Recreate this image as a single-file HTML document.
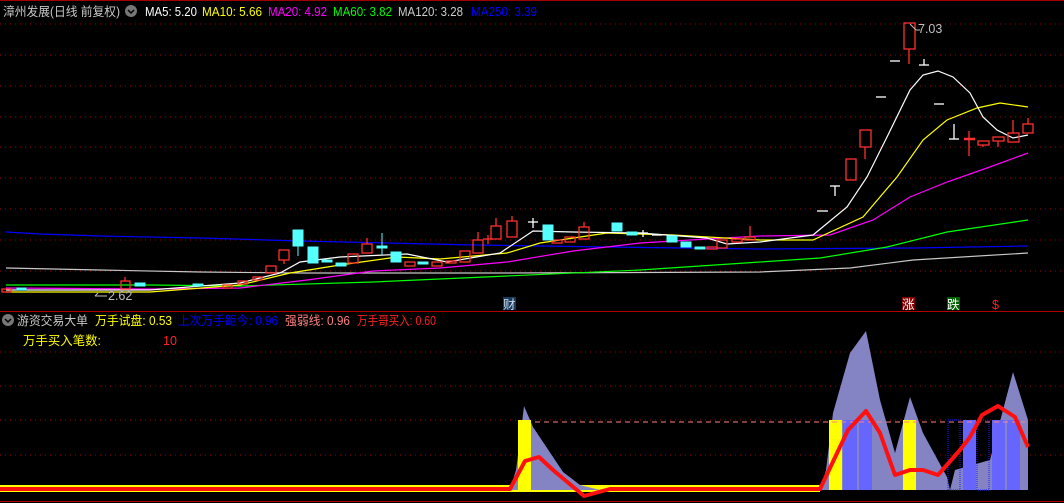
<!DOCTYPE html>
<html><head><meta charset="utf-8"><style>
html,body{margin:0;padding:0;background:#000;overflow:hidden}
svg{display:block}
text{font-family:"Liberation Sans","Noto Sans CJK SC",sans-serif;font-size:12.5px}
</style></head><body>
<svg width="1064" height="503" viewBox="0 0 1064 503" xmlns="http://www.w3.org/2000/svg">
<rect width="1064" height="503" fill="#000"/>
<line x1="0" y1="0.5" x2="1064" y2="0.5" stroke="#a00000"/>
<g stroke="#a00000" stroke-dasharray="1,4">
<line x1="0" y1="24" x2="1064" y2="24"/><line x1="0" y1="55" x2="1064" y2="55"/><line x1="0" y1="86" x2="1064" y2="86"/>
<line x1="0" y1="117" x2="1064" y2="117"/><line x1="0" y1="147" x2="1064" y2="147"/><line x1="0" y1="178" x2="1064" y2="178"/>
<line x1="0" y1="209" x2="1064" y2="209"/><line x1="0" y1="240" x2="1064" y2="240"/><line x1="0" y1="271" x2="1064" y2="271"/>
<line x1="0" y1="352" x2="1064" y2="352"/><line x1="0" y1="386" x2="1064" y2="386"/><line x1="0" y1="420" x2="1064" y2="420"/><line x1="0" y1="455" x2="1064" y2="455"/>
</g>
<line x1="0" y1="311.5" x2="1064" y2="311.5" stroke="#b00000"/>
<line x1="0" y1="501.5" x2="1064" y2="501.5" stroke="#b00000"/>
<text x="3" y="16" fill="#c8c8c8" textLength="117" lengthAdjust="spacingAndGlyphs">漳州发展(日线 前复权)</text>
<circle cx="131" cy="11" r="6" fill="#777"/><path d="M128 10 l3 3 l3 -3" stroke="#000" fill="none" stroke-width="1.5"/>
<text x="145" y="16" fill="#fff" textLength="52" lengthAdjust="spacingAndGlyphs">MA5: 5.20</text>
<text x="202" y="16" fill="#ff0" textLength="60" lengthAdjust="spacingAndGlyphs">MA10: 5.66</text>
<text x="268" y="16" fill="#f0f" textLength="59" lengthAdjust="spacingAndGlyphs">MA20: 4.92</text>
<text x="333" y="16" fill="#0f0" textLength="59" lengthAdjust="spacingAndGlyphs">MA60: 3.82</text>
<text x="398" y="16" fill="#ccc" textLength="65" lengthAdjust="spacingAndGlyphs">MA120: 3.28</text>
<text x="471" y="16" fill="#00f" textLength="66" lengthAdjust="spacingAndGlyphs">MA250: 3.39</text>
<g fill="none" stroke-width="1.2">
<polyline stroke="#0000ff" points="6,232 40,234 100,236 200,238 300,241 388,243 473,245 607,247 760,249 913,248 1028,246"/>
<polyline stroke="#c8c8c8" points="6,268 100,270 200,272 300,273 500,273 760,272 850,268 913,260 1028,253"/>
<polyline stroke="#00ff00" points="6,285 150,285 240,286 373,282 507,276 640,270 760,262 820,258 887,247 947,232 1028,220"/>
<polyline stroke="#ff00ff" points="6,288 150,289 240,288 307,280 373,271 440,268 507,262 573,251 640,243 707,239 760,236 830,235 873,220 910,197 947,182 987,168 1028,153"/>
<polyline stroke="#ffff00" points="6,292 150,292 240,285 290,273 340,265 397,257 440,259 507,253 540,243 607,233 673,235 760,240 813,240 863,217 897,177 923,140 947,120 977,108 1000,103 1028,107"/>
<polyline stroke="#ffffff" points="6,290 150,290 240,283 280,273 300,262 340,257 407,254 447,262 500,253 533,231 573,232 640,233 707,238 727,244 760,242 813,235 847,207 867,177 887,137 910,90 923,75 938,71 953,77 970,93 983,117 997,130 1013,138 1028,135"/>
</g>
<g stroke="#ff3030" fill="none" stroke-width="1.3">
<rect x="2" y="289" width="9" height="3"/><rect x="121" y="281" width="9" height="8"/><line x1="125" y1="277" x2="125" y2="281"/>
<rect x="223" y="285" width="9" height="3"/><rect x="238" y="281" width="9" height="3"/><rect x="253" y="277" width="9" height="3"/>
<rect x="266" y="266" width="10" height="7"/><rect x="279" y="250" width="10" height="10"/><line x1="284" y1="260" x2="284" y2="264"/>
<rect x="348" y="254" width="10" height="9"/><rect x="362" y="244" width="10" height="9"/><line x1="367" y1="238" x2="367" y2="244"/>
<rect x="405" y="262" width="10" height="4"/><rect x="432" y="262" width="10" height="4"/><rect x="446" y="261" width="10" height="2"/>
<rect x="460" y="251" width="10" height="11"/><rect x="473" y="240" width="10" height="13"/><line x1="478" y1="232" x2="478" y2="240"/>
<line x1="483" y1="239" x2="493" y2="239"/><line x1="488" y1="235" x2="488" y2="244"/>
<rect x="491" y="226" width="10" height="13"/><line x1="496" y1="218" x2="496" y2="226"/>
<rect x="507" y="221" width="10" height="16"/><line x1="512" y1="216" x2="512" y2="221"/>
<rect x="552" y="240" width="10" height="3"/><rect x="565" y="237" width="10" height="5"/><rect x="579" y="227" width="10" height="12"/><line x1="584" y1="222" x2="584" y2="227"/>
<rect x="707" y="247" width="10" height="2"/><rect x="717" y="240" width="10" height="8"/><rect x="732" y="239" width="10" height="3"/>
<rect x="745" y="237" width="10" height="3"/><line x1="750" y1="226" x2="750" y2="237"/>
<rect x="846" y="159" width="10" height="21"/><rect x="860" y="130" width="11" height="17"/><line x1="865" y1="147" x2="865" y2="159"/>
<rect x="904" y="23" width="11" height="26"/><line x1="909" y1="49" x2="909" y2="64"/>
<line x1="964" y1="139" x2="975" y2="139" stroke-width="2.5"/><line x1="969" y1="131" x2="969" y2="156"/>
<rect x="978" y="141" width="11" height="4"/><line x1="983" y1="145" x2="983" y2="147"/>
<rect x="993" y="137" width="11" height="4"/><line x1="998" y1="141" x2="998" y2="147"/>
<rect x="1008" y="133" width="11" height="9"/><line x1="1013" y1="120" x2="1013" y2="133"/>
<rect x="1023" y="124" width="10" height="9"/><line x1="1028" y1="118" x2="1028" y2="124"/>
</g>
<g fill="#55ffff" stroke="#55ffff">
<rect x="17" y="288" width="9" height="2"/><rect x="135" y="283" width="10" height="3"/><rect x="193" y="284" width="10" height="2"/>
<rect x="293" y="230" width="10" height="16"/><line x1="298" y1="246" x2="298" y2="256"/>
<rect x="308" y="247" width="10" height="16"/><rect x="322" y="260" width="10" height="2"/><rect x="336" y="263" width="10" height="3"/>
<rect x="377" y="246" width="10" height="2"/><line x1="382" y1="233" x2="382" y2="255"/>
<rect x="391" y="252" width="10" height="10"/><rect x="418" y="262" width="10" height="2"/>
<rect x="543" y="225" width="10" height="15"/><rect x="612" y="223" width="10" height="8"/><rect x="627" y="232" width="10" height="3"/>
<rect x="667" y="236" width="10" height="6"/><rect x="681" y="242" width="10" height="5"/><rect x="695" y="247" width="10" height="2"/>
</g>
<g stroke="#fff" fill="none" stroke-width="1.3">
<line x1="528" y1="222" x2="538" y2="222"/><line x1="533" y1="218" x2="533" y2="228"/>
<line x1="638" y1="233" x2="648" y2="233"/><line x1="643" y1="230" x2="643" y2="237"/>
<line x1="652" y1="235" x2="662" y2="235"/>
<line x1="817" y1="211" x2="828" y2="211"/>
<line x1="830" y1="186" x2="840" y2="186"/><line x1="835" y1="186" x2="835" y2="196"/>
<line x1="876" y1="97" x2="886" y2="97"/><line x1="890" y1="61" x2="900" y2="61"/>
<line x1="919" y1="65" x2="929" y2="65"/><line x1="924" y1="59" x2="924" y2="65"/>
<line x1="934" y1="104" x2="944" y2="104"/>
<line x1="949" y1="139" x2="959" y2="139"/><line x1="954" y1="124" x2="954" y2="139"/>
</g>
<text x="918" y="33" fill="#c0c0c0">7.03</text><path d="M910 24 l6 6 h4" stroke="#c0c0c0" fill="none"/>
<text x="108" y="300" fill="#c0c0c0">2.62</text><path d="M95 296 h12 M95 296 l3 -3" stroke="#c0c0c0" fill="none"/>
<rect x="503" y="297" width="13" height="13" fill="#1a3a5a"/><text x="503" y="309" fill="#cde">财</text>
<rect x="902" y="297" width="13" height="13" fill="#800000"/><text x="902" y="309" fill="#fff">涨</text>
<rect x="947" y="297" width="13" height="13" fill="#006000"/><text x="947" y="309" fill="#fff">跌</text>
<text x="992" y="309" fill="#ff2020">$</text>
<circle cx="8" cy="320" r="6" fill="#777"/><path d="M5 319 l3 3 l3 -3" stroke="#000" fill="none" stroke-width="1.5"/>
<text x="17" y="325" fill="#c8c8c8" textLength="71" lengthAdjust="spacingAndGlyphs">游资交易大单</text>
<text x="95" y="325" fill="#ff0" textLength="77" lengthAdjust="spacingAndGlyphs">万手试盘: 0.53</text>
<text x="178" y="325" fill="#0000ff" textLength="100" lengthAdjust="spacingAndGlyphs">上次万手距今: 0.96</text>
<text x="285" y="325" fill="#ff8080" textLength="65" lengthAdjust="spacingAndGlyphs">强弱线: 0.96</text>
<text x="357" y="325" fill="#ff2020" textLength="79" lengthAdjust="spacingAndGlyphs">万手哥买入: 0.60</text>
<text x="23" y="345" fill="#ff0" textLength="78" lengthAdjust="spacingAndGlyphs">万手买入笔数:</text>
<text x="163" y="345" fill="#ff2020">10</text>
<rect x="0" y="485" width="820" height="7" fill="#ff0"/>
<polygon fill="#8484c4" points="510,490 516,470 520,440 524,406 533,427 547,448 563,472 580,485 600,490"/>
<polygon fill="#8484c4" points="820,490 826,470 833,413 850,353 866,331 880,400 895,453 910,397 923,433 947,477 950,490 955,470 990,460 1003,410 1013,372 1028,420 1028,490"/>
<g fill="#6666ff">
<rect x="843" y="420" width="14" height="70"/><rect x="859" y="420" width="13" height="70"/>
<rect x="963" y="420" width="13" height="70"/><rect x="992" y="420" width="13" height="70"/><rect x="1007" y="420" width="13" height="70"/>
</g>
<g fill="none" stroke="#2020ff" stroke-dasharray="1,1">
<rect x="948" y="420" width="12" height="70"/><rect x="977" y="420" width="12" height="70"/>
</g>
<g fill="#ff0">
<rect x="518" y="420" width="13" height="70"/><rect x="829" y="420" width="13" height="70"/><rect x="903" y="420" width="13" height="70"/>
</g>
<line x1="535" y1="422" x2="1025" y2="422" stroke="#ff8080" stroke-dasharray="5,4"/>
<polyline fill="none" stroke="#ff1010" stroke-width="4" stroke-linejoin="round" points="0,489 510,489 525,461 539,457 553,470 584,496 610,489 820,489 848,430 866,411 880,433 895,475 910,470 923,470 938,475 960,450 970,437 982,415 998,406 1015,417 1028,447"/>
</svg>
</body></html>
